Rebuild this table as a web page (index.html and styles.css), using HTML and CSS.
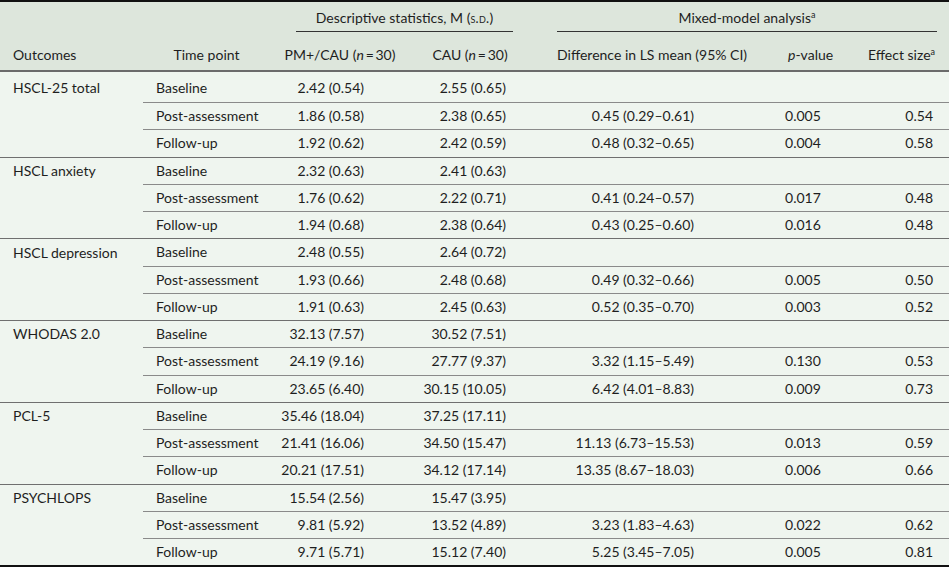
FILE: index.html
```html
<!DOCTYPE html>
<html>
<head>
<meta charset="utf-8">
<link rel="stylesheet" href="styles.css">
</head>
<body>
<table class="t">
  <colgroup>
    <col class="c1"><col class="c2"><col class="c3"><col class="c4"><col class="c5"><col class="c6"><col class="c7">
  </colgroup>
  <thead>
    <tr class="h1">
      <th></th><th></th>
      <th colspan="2"><div class="grp grp-d">Descriptive statistics, M (<span class="sc">s.d.</span>)</div></th>
      <th colspan="3"><div class="grp grp-m">Mixed-model analysis<sup>a</sup></div></th>
    </tr>
    <tr class="h2">
      <th class="l1">Outcomes</th>
      <th class="tp">Time point</th>
      <th class="ctr">PM+/CAU (<i>n</i>&#8201;=&#8201;30)</th>
      <th class="ctr">CAU (<i>n</i>&#8201;=&#8201;30)</th>
      <th class="dh">Difference in LS mean (95% CI)</th>
      <th class="ph"><i>p</i>-value</th>
      <th class="eh">Effect size<sup>a</sup></th>
    </tr>
  </thead>
  <tbody>
    <tr class="first"><td class="o">HSCL-25 total</td><td class="tp">Baseline</td><td class="v3">2.42 (0.54)</td><td class="v4">2.55 (0.65)</td><td class="v5"></td><td class="v6"></td><td class="v7"></td></tr>
    <tr><td class="o"></td><td class="tp">Post-assessment</td><td class="v3">1.86 (0.58)</td><td class="v4">2.38 (0.65)</td><td class="v5">0.45 (0.29–0.61)</td><td class="v6">0.005</td><td class="v7">0.54</td></tr>
    <tr class="last"><td class="o"></td><td class="tp">Follow-up</td><td class="v3">1.92 (0.62)</td><td class="v4">2.42 (0.59)</td><td class="v5">0.48 (0.32–0.65)</td><td class="v6">0.004</td><td class="v7">0.58</td></tr>

    <tr><td class="o">HSCL anxiety</td><td class="tp">Baseline</td><td class="v3">2.32 (0.63)</td><td class="v4">2.41 (0.63)</td><td class="v5"></td><td class="v6"></td><td class="v7"></td></tr>
    <tr><td class="o"></td><td class="tp">Post-assessment</td><td class="v3">1.76 (0.62)</td><td class="v4">2.22 (0.71)</td><td class="v5">0.41 (0.24–0.57)</td><td class="v6">0.017</td><td class="v7">0.48</td></tr>
    <tr class="last"><td class="o"></td><td class="tp">Follow-up</td><td class="v3">1.94 (0.68)</td><td class="v4">2.38 (0.64)</td><td class="v5">0.43 (0.25–0.60)</td><td class="v6">0.016</td><td class="v7">0.48</td></tr>

    <tr><td class="o">HSCL depression</td><td class="tp">Baseline</td><td class="v3">2.48 (0.55)</td><td class="v4">2.64 (0.72)</td><td class="v5"></td><td class="v6"></td><td class="v7"></td></tr>
    <tr><td class="o"></td><td class="tp">Post-assessment</td><td class="v3">1.93 (0.66)</td><td class="v4">2.48 (0.68)</td><td class="v5">0.49 (0.32–0.66)</td><td class="v6">0.005</td><td class="v7">0.50</td></tr>
    <tr class="last"><td class="o"></td><td class="tp">Follow-up</td><td class="v3">1.91 (0.63)</td><td class="v4">2.45 (0.63)</td><td class="v5">0.52 (0.35–0.70)</td><td class="v6">0.003</td><td class="v7">0.52</td></tr>

    <tr><td class="o">WHODAS 2.0</td><td class="tp">Baseline</td><td class="v3">32.13 (7.57)</td><td class="v4">30.52 (7.51)</td><td class="v5"></td><td class="v6"></td><td class="v7"></td></tr>
    <tr><td class="o"></td><td class="tp">Post-assessment</td><td class="v3">24.19 (9.16)</td><td class="v4">27.77 (9.37)</td><td class="v5">3.32 (1.15–5.49)</td><td class="v6">0.130</td><td class="v7">0.53</td></tr>
    <tr class="last"><td class="o"></td><td class="tp">Follow-up</td><td class="v3">23.65 (6.40)</td><td class="v4">30.15 (10.05)</td><td class="v5">6.42 (4.01–8.83)</td><td class="v6">0.009</td><td class="v7">0.73</td></tr>

    <tr><td class="o">PCL-5</td><td class="tp">Baseline</td><td class="v3">35.46 (18.04)</td><td class="v4">37.25 (17.11)</td><td class="v5"></td><td class="v6"></td><td class="v7"></td></tr>
    <tr><td class="o"></td><td class="tp">Post-assessment</td><td class="v3">21.41 (16.06)</td><td class="v4">34.50 (15.47)</td><td class="v5">11.13 (6.73–15.53)</td><td class="v6">0.013</td><td class="v7">0.59</td></tr>
    <tr class="last"><td class="o"></td><td class="tp">Follow-up</td><td class="v3">20.21 (17.51)</td><td class="v4">34.12 (17.14)</td><td class="v5">13.35 (8.67–18.03)</td><td class="v6">0.006</td><td class="v7">0.66</td></tr>

    <tr><td class="o">PSYCHLOPS</td><td class="tp">Baseline</td><td class="v3">15.54 (2.56)</td><td class="v4">15.47 (3.95)</td><td class="v5"></td><td class="v6"></td><td class="v7"></td></tr>
    <tr><td class="o"></td><td class="tp">Post-assessment</td><td class="v3">9.81 (5.92)</td><td class="v4">13.52 (4.89)</td><td class="v5">3.23 (1.83–4.63)</td><td class="v6">0.022</td><td class="v7">0.62</td></tr>
    <tr class="end"><td class="o"></td><td class="tp">Follow-up</td><td class="v3">9.71 (5.71)</td><td class="v4">15.12 (7.40)</td><td class="v5">5.25 (3.45–7.05)</td><td class="v6">0.005</td><td class="v7">0.81</td></tr>
  </tbody>
</table>
</body>
</html>
```

FILE: styles.css
```css
html, body {
  margin: 0;
  padding: 0;
  background: #eff5ef;
}

.t {
  width: 949px;
  border-collapse: collapse;
  table-layout: fixed;
  font-family: "Lato", "Noto Sans", sans-serif;
  font-size: 14px;
  color: #1e1e1e;
  border-top: 2px solid #111;
  border-bottom: 2px solid #111;
}

.c1 { width: 143px; }
.c2 { width: 127px; }
.c3 { width: 140px; }
.c4 { width: 120px; }
.c5 { width: 255px; }
.c6 { width: 60px; }
.c7 { width: 104px; }

thead {
  background: #dde6dc;
}

th {
  font-weight: normal;
  padding: 0;
  line-height: 16px;
}

.h1 th {
  padding-top: 8px;
  text-align: center;
}

.grp {
  padding-bottom: 5px;
  border-bottom: 1px solid #333;
}

.grp-d { margin: 0 17px 0 26px; }
.grp-m { margin: 0 12px 0 27px; }

.sc {
  font-variant: small-caps;
  font-size: 13px;
  letter-spacing: 0.3px;
}

sup {
  font-size: 9px;
  line-height: 0;
  vertical-align: 5px;
}

.h2 th {
  padding-top: 15px;
  padding-bottom: 7px;
  border-bottom: 2px solid #6b6b6b;
}

.h2 .l1 { text-align: left; padding-left: 13px; }
.h2 .tp { text-align: center; padding-left: 0; }
.h2 .ctr { text-align: center; }
.h2 .dh { text-align: left; padding-left: 27px; }
.h2 .ph { text-align: left; padding-left: 3px; }
.h2 .eh { text-align: right; padding-right: 14px; }

td {
  padding: 0;
  height: 26.25px;
  line-height: 16px;
  vertical-align: middle;
  white-space: nowrap;
  border-bottom: 1px solid #8a8a8a;
}

tr.first td { height: 28px; padding-top: 2px; }

td.o {
  padding-left: 13px;
  border-bottom: none;
}

tr.last td.o { border-bottom: 1px solid #6f6f6f; }
tr.last td { border-bottom: 1px solid #6f6f6f; }
tr.end td { border-bottom: none; }

td.tp { padding-left: 13px; }
td.v3 { text-align: right; padding-right: 46px; }
td.v4 { text-align: right; padding-right: 24px; }
td.v5 { text-align: right; padding-right: 91px; }
td.v6 { text-align: right; padding-right: 26px; }
td.v7 { text-align: right; padding-right: 16px; }
```
